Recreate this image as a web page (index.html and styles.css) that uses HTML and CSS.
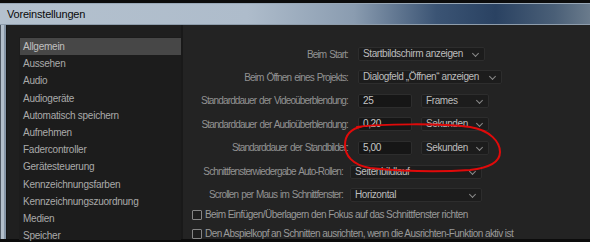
FILE: index.html
```html
<!DOCTYPE html>
<html lang="de">
<head>
  <meta charset="UTF-8" />
  <title>Voreinstellungen</title>
  <link rel="stylesheet" href="styles.css">
</head>
<body>

<div class="window">
  <div class="titlebar">Voreinstellungen</div>

  <div class="content">
    <div class="sidebar">
      <ul class="category-list">
        <li class="selected">Allgemein</li>
        <li>Aussehen</li>
        <li>Audio</li>
        <li>Audiogeräte</li>
        <li>Automatisch speichern</li>
        <li>Aufnehmen</li>
        <li>Fadercontroller</li>
        <li>Gerätesteuerung</li>
        <li>Kennzeichnungsfarben</li>
        <li>Kennzeichnungszuordnung</li>
        <li>Medien</li>
        <li>Speicher</li>
      </ul>
    </div>

    <div class="settings">
      <div class="form-grid">
        <label>Beim Start:</label>
        <div class="controls">
          <div class="dropdown w-start">Startbildschirm anzeigen<span class="chevron"></span></div>
        </div>

        <label>Beim Öffnen eines Projekts:</label>
        <div class="controls">
          <div class="dropdown w-open">Dialogfeld „Öffnen“ anzeigen<span class="chevron"></span></div>
        </div>

        <label>Standarddauer der Videoüberblendung:</label>
        <div class="controls">
          <div class="field">25</div>
          <div class="dropdown w-unit">Frames<span class="chevron"></span></div>
        </div>

        <label>Standarddauer der Audioüberblendung:</label>
        <div class="controls">
          <div class="field">0,20</div>
          <div class="dropdown w-unit">Sekunden<span class="chevron"></span></div>
        </div>

        <label>Standarddauer der Standbilder:</label>
        <div class="controls">
          <div class="field">5,00</div>
          <div class="dropdown w-unit">Sekunden<span class="chevron"></span></div>
        </div>
      </div>

      <div class="form-grid second">
        <label>Schnittfensterwiedergabe Auto-Rollen:</label>
        <div class="controls">
          <div class="dropdown w-scroll">Seitenbildlauf<span class="chevron"></span></div>
        </div>

        <label>Scrollen per Maus im Schnittfenster:</label>
        <div class="controls">
          <div class="dropdown w-scroll">Horizontal<span class="chevron"></span></div>
        </div>
      </div>

      <div class="check-list">
        <div class="check-row"><span class="box"></span>Beim Einfügen/Überlagern den Fokus auf das Schnittfenster richten</div>
        <div class="check-row"><span class="box"></span>Den Abspielkopf an Schnitten ausrichten, wenn die Ausrichten-Funktion aktiv ist</div>
      </div>
    </div>
  </div>

  <!-- hand-drawn marker around the still image duration -->
  <svg class="scribble" width="590" height="242" viewBox="0 0 590 242">
    <path d="M357,127 C380,124 440,123 470,127 C490,130 500,142 500,152 C500,163 488,168 470,170 C440,172 400,171 370,168 C352,165 345,155 345,145 C345,136 350,129 362,126.5"
          fill="none" stroke="#e00a0a" stroke-width="2" stroke-linecap="round"/>
  </svg>
</div>

</body>
</html>
```

FILE: styles.css
```css
body {
  margin: 0;
  padding-top: 3px;
  background-color: #0c0c0c;
  font-family: "Liberation Sans", Arial, sans-serif;
  overflow: hidden;
}
.window {
  position: relative;
  height: 239px;
}
.titlebar {
  height: 20px;
  border-top: 1px solid #98a7b6;
  border-bottom: 1px solid #8e9dac;
  padding-left: 7px;
  display: flex;
  align-items: center;
  font-size: 11px;
  letter-spacing: -0.2px;
  color: #0a0a0a;
  background: linear-gradient(90deg, #b4c1ce 0%, #aebccb 42%, #8a9cb0 60%, #3b5474 74%, #2a4262 84%, #4a5f77 94%, #6a7b8c 100%);
}
.content {
  display: flex;
  height: 214px;
  padding-left: 7px;
  background: linear-gradient(90deg, #4e5863 0 1px, #b3bfcb 1px 4px, #8595a6 4px 6px, #161616 6px 7px, #1f1f1f 7px);
}
.sidebar {
  width: 162px;
  padding: 12px 0 0 12px;
  border-right: 2px solid #191919;
}
.category-list {
  list-style: none;
  margin: 0;
  padding: 1px 0 0 1px;
  height: 100%;
  background-color: #1c1c1c;
  font-size: 10px;
  letter-spacing: -0.25px;
  color: #aaaaaa;
}
.category-list li {
  height: 17.2px;
  line-height: 17px;
  padding-left: 3px;
  white-space: nowrap;
}
.category-list li.selected {
  background-color: #474747;
  color: #c0c0c0;
}
.settings {
  flex: 1;
  padding-top: 22px;
  background-color: #232323;
  font-size: 10px;
  color: #929292;
}
.form-grid {
  display: grid;
  grid-template-columns: 165px auto;
  column-gap: 10px;
  row-gap: 9.4px;
  grid-auto-rows: 14px;
  align-items: center;
}
.form-grid.second {
  grid-template-columns: 160px auto;
  column-gap: 7px;
  margin-top: 10px;
}
.form-grid label {
  text-align: right;
  letter-spacing: -0.85px;
  word-spacing: 1px;
  white-space: nowrap;
}
.controls {
  display: flex;
  gap: 9px;
  height: 14px;
}
.dropdown, .field {
  box-sizing: border-box;
  height: 14px;
  line-height: 12px;
  padding-left: 4px;
  border: 1px solid #2d2d2d;
  border-radius: 2px;
  color: #bdbdbd;
  letter-spacing: -0.4px;
  white-space: nowrap;
}
.dropdown {
  position: relative;
  background-color: #1c1c1c;
}
.field {
  width: 54px;
  background-color: #161616;
  color: #c6c6c6;
}
.chevron {
  position: absolute;
  right: 6px;
  top: 3px;
  width: 4px;
  height: 4px;
  border-right: 1px solid #8a8a8a;
  border-bottom: 1px solid #8a8a8a;
  transform: rotate(45deg);
}
.w-start { width: 127px; }
.w-open { width: 144px; }
.w-unit { width: 68px; }
.w-scroll { width: 132px; }
.check-list {
  margin-top: 8px;
  padding-left: 9px;
}
.check-row {
  display: flex;
  align-items: center;
  height: 10px;
  margin-bottom: 9px;
  letter-spacing: -0.56px;
  white-space: nowrap;
  color: #9a9a9a;
}
.box {
  box-sizing: border-box;
  width: 10px;
  height: 10px;
  margin-right: 3px;
  border: 1px solid #858585;
  border-radius: 1px;
  background-color: #1d1d1d;
}
.scribble {
  position: absolute;
  left: 0;
  top: -3px;
  pointer-events: none;
}
```
